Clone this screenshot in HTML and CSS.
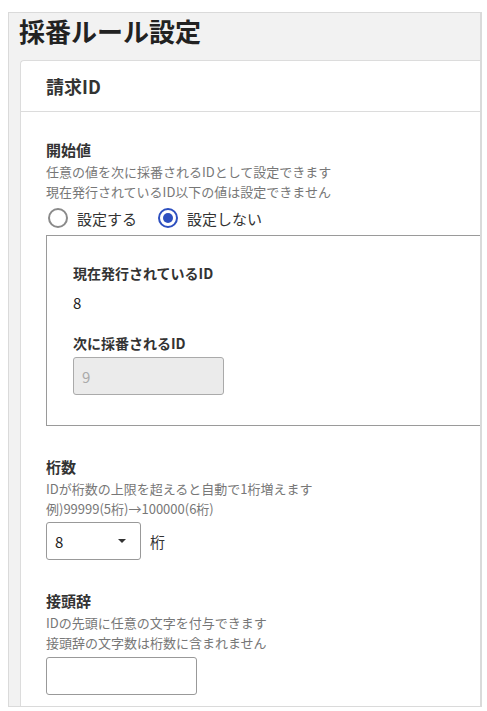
FILE: index.html
```html
<!DOCTYPE html>
<html lang="ja">
<head>
    <meta charset="UTF-8">
    <meta name="viewport" content="width=device-width, initial-scale=1.0">
    <title>採番ルール設定</title>
    <link rel="stylesheet" href="styles.css">
</head>
<body>
    <div class="page">
        <h1 class="page-title">採番ルール設定</h1>

        <!-- 請求ID -->
        <div class="card">
            <div class="card-header">請求ID</div>
            <div class="card-body">

                <!-- 開始値 -->
                <div class="field">
                    <div class="field-label">開始値</div>
                    <div class="field-desc">
                        <p>任意の値を次に採番されるIDとして設定できます</p>
                        <p>現在発行されているID以下の値は設定できません</p>
                    </div>
                    <div class="radio-row">
                        <label class="radio"><input type="radio" name="start"><span>設定する</span></label>
                        <label class="radio"><input type="radio" name="start" checked><span>設定しない</span></label>
                    </div>
                    <div class="start-box">
                        <div class="sub-label">現在発行されているID</div>
                        <div class="current-value">8</div>
                        <div class="sub-label next-label">次に採番されるID</div>
                        <input class="text-input" type="text" value="9" disabled>
                    </div>
                </div>

                <!-- 桁数 -->
                <div class="field">
                    <div class="field-label">桁数</div>
                    <div class="field-desc">
                        <p>IDが桁数の上限を超えると自動で1桁増えます</p>
                        <p>例)99999(5桁)→100000(6桁)</p>
                    </div>
                    <div class="digits-row">
                        <div class="select">
                            <span>8</span>
                            <span class="caret"></span>
                        </div>
                        <span class="unit">桁</span>
                    </div>
                </div>

                <!-- 接頭辞 -->
                <div class="field">
                    <div class="field-label">接頭辞</div>
                    <div class="field-desc">
                        <p>IDの先頭に任意の文字を付与できます</p>
                        <p>接頭辞の文字数は桁数に含まれません</p>
                    </div>
                    <input class="text-input" type="text">
                </div>

            </div>
        </div>
    </div>
</body>
</html>
```

FILE: styles.css
```css
* {
    margin: 0;
    padding: 0;
    box-sizing: border-box;
    font-family: "Noto Sans CJK JP", "Noto Sans", sans-serif;
}

body {
    background: #fff;
    padding: 12px 0 0 8px;
    color: #333;
}

.page {
    width: 474px;
    height: 695px;
    background: #f2f2f2;
    border: 1px solid #dadada;
    border-right-width: 2px;
    overflow: hidden;
}

.page-title {
    font-size: 26px;
    font-weight: bold;
    color: #222;
    line-height: 36px;
    margin: 0 0 11px 10px;
}

.card {
    background: #fff;
    border: 1px solid #dcdcdc;
    border-right: none;
    border-radius: 4px 0 0 0;
    margin-left: 11px;
    min-height: 700px;
}

.card-header {
    height: 51px;
    padding-left: 25px;
    display: flex;
    align-items: center;
    font-size: 18px;
    font-weight: bold;
    color: #333;
    border-bottom: 1px solid #dcdcdc;
}

.card-body {
    padding: 27px 0 0 25px;
}

.field {
    margin-bottom: 30px;
}

.field-label {
    font-size: 15px;
    font-weight: bold;
    line-height: 22px;
    color: #333;
}

.field-desc {
    font-size: 13px;
    line-height: 19.5px;
    color: #777;
    margin-top: 1px;
}

.radio-row {
    display: flex;
    gap: 19px;
    margin-top: 5px;
    height: 24px;
    align-items: center;
}

.radio {
    display: flex;
    align-items: center;
    gap: 9px;
    font-size: 15px;
    color: #333;
    margin-left: 2px;
}

.radio input {
    appearance: none;
    width: 20px;
    height: 20px;
    border: 2px solid #8a8a8a;
    border-radius: 50%;
    background: #fff;
    display: flex;
    align-items: center;
    justify-content: center;
}

.radio input:checked {
    border-color: #2d4fbf;
}

.radio input:checked::after {
    content: "";
    width: 10px;
    height: 10px;
    border-radius: 50%;
    background: #2d4fbf;
}

.start-box {
    margin-top: 5px;
    border: 1px solid #9a9a9a;
    border-right: none;
    padding: 27px 0 30px 26px;
}

.sub-label {
    font-size: 14px;
    font-weight: bold;
    line-height: 20px;
    color: #333;
}

.current-value {
    font-size: 15px;
    line-height: 22px;
    margin-top: 9px;
    color: #222;
}

.next-label {
    margin-top: 19px;
}

.text-input {
    display: block;
    width: 151px;
    height: 38px;
    margin-top: 4px;
    border: 1px solid #999;
    border-radius: 3px;
    padding: 0 8px;
    font-size: 15px;
    color: #222;
    background: #fff;
}

.text-input:disabled {
    background: #ebebeb;
    color: #aaa;
    border-color: #aaa;
}

.digits-row {
    display: flex;
    align-items: center;
    gap: 9px;
    margin-top: 4px;
}

.select {
    width: 95px;
    height: 38px;
    border: 1px solid #999;
    border-radius: 3px;
    display: flex;
    align-items: center;
    justify-content: space-between;
    padding: 0 14px 0 8px;
    font-size: 15px;
    color: #222;
}

.caret {
    width: 0;
    height: 0;
    border-left: 4px solid transparent;
    border-right: 4px solid transparent;
    border-top: 4px solid #333;
}

.unit {
    font-size: 15px;
    color: #333;
}

.field:last-child .text-input {
    margin-top: 5px;
}
```
